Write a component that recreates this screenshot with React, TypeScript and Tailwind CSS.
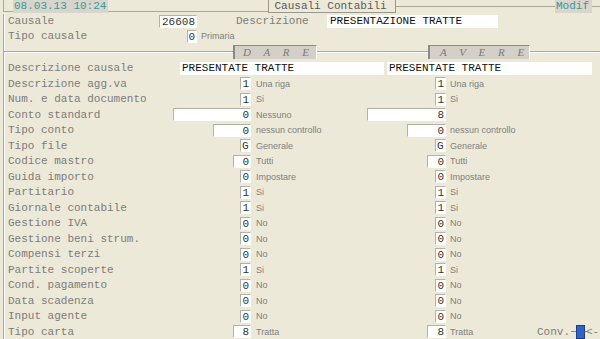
import React from "react";

type Cell = { v: string; w: string; t: string };
type Row = { label: string; d: Cell; a: Cell };

const rows: Row[] = [
  { label: "Descrizione agg.va", d: { v: "1", w: "w-[11px]", t: "Una riga" }, a: { v: "1", w: "w-[11px]", t: "Una riga" } },
  { label: "Num. e data documento", d: { v: "1", w: "w-[11px]", t: "Si" }, a: { v: "1", w: "w-[11px]", t: "Si" } },
  { label: "Conto standard", d: { v: "0", w: "w-[78px]", t: "Nessuno" }, a: { v: "8", w: "w-[79px]", t: "" } },
  { label: "Tipo conto", d: { v: "0", w: "w-[38px]", t: "nessun controllo" }, a: { v: "0", w: "w-[39px]", t: "nessun controllo" } },
  { label: "Tipo file", d: { v: "G", w: "w-[11px]", t: "Generale" }, a: { v: "G", w: "w-[11px]", t: "Generale" } },
  { label: "Codice mastro", d: { v: "0", w: "w-[18px]", t: "Tutti" }, a: { v: "0", w: "w-[19px]", t: "Tutti" } },
  { label: "Guida importo", d: { v: "0", w: "w-[11px]", t: "Impostare" }, a: { v: "0", w: "w-[11px]", t: "Impostare" } },
  { label: "Partitario", d: { v: "1", w: "w-[11px]", t: "Si" }, a: { v: "1", w: "w-[11px]", t: "Si" } },
  { label: "Giornale contabile", d: { v: "1", w: "w-[11px]", t: "Si" }, a: { v: "1", w: "w-[11px]", t: "Si" } },
  { label: "Gestione IVA", d: { v: "0", w: "w-[11px]", t: "No" }, a: { v: "0", w: "w-[11px]", t: "No" } },
  { label: "Gestione beni strum.", d: { v: "0", w: "w-[11px]", t: "No" }, a: { v: "0", w: "w-[11px]", t: "No" } },
  { label: "Compensi terzi", d: { v: "0", w: "w-[11px]", t: "No" }, a: { v: "0", w: "w-[11px]", t: "No" } },
  { label: "Partite scoperte", d: { v: "1", w: "w-[11px]", t: "Si" }, a: { v: "1", w: "w-[11px]", t: "Si" } },
  { label: "Cond. pagamento", d: { v: "0", w: "w-[11px]", t: "No" }, a: { v: "0", w: "w-[11px]", t: "No" } },
  { label: "Data scadenza", d: { v: "0", w: "w-[11px]", t: "No" }, a: { v: "0", w: "w-[11px]", t: "No" } },
  { label: "Input agente", d: { v: "0", w: "w-[11px]", t: "No" }, a: { v: "0", w: "w-[11px]", t: "No" } },
  { label: "Tipo carta", d: { v: "8", w: "w-[18px]", t: "Tratta" }, a: { v: "8", w: "w-[19px]", t: "Tratta" } },
];

const mono = "font-['Liberation_Mono','Courier_New',monospace]";
const sans = "font-['Liberation_Sans',Arial,sans-serif]";

function Field({ v, w, left }: { v: string; w: string; left?: boolean }) {
  return (
    <div
      className={`${w} h-[13px] bg-white border-t border-l border-[#b4b1a6] border-b border-r border-b-white border-r-white text-[11px] leading-[12px] text-[#333] ${
        left ? "text-left pl-[1px]" : "text-right pr-[1px]"
      } overflow-hidden whitespace-pre`}
    >
      {v}
    </div>
  );
}

function Desc({ t }: { t: string }) {
  return <span className={`${sans} text-[9px] leading-[13px] text-[#808080] whitespace-nowrap`}>{t}</span>;
}

export default function App() {
  return (
    <div className={`w-[600px] h-[339px] bg-[#ece9d8] overflow-hidden ${mono} text-[11px] text-[#7c7c7c]`}>
      {/* header */}
      <div className="flex items-start h-[14px]">
        <div className="w-[3px]" />
        <div className="w-[10px] h-[12px] border-b border-l border-[#aca899]" />
        <div className="w-[95px] h-[13px] bg-[#d8d5cc] text-[#3a9a9a] leading-[13px] pl-[1px] whitespace-nowrap">
          08.03.13 10:24
        </div>
        <div className="flex-1 h-[12px] border-b border-[#aca899]" />
        <div className="w-[128px] h-[13px] border-l border-r border-b border-[#9a978c] text-[#5a5a5a] leading-[12px] pl-[6px] whitespace-nowrap">
          Causali Contabili
        </div>
        <div className="flex-1 h-[7px] border-b border-[#aca899]" />
        <div className="w-[37px] h-[13px] bg-[#d8d5cc] text-[#3a9a9a] leading-[13px] pl-[1px]">Modif</div>
        <div className="w-[8px] h-[7px] border-b border-[#aca899]" />
      </div>

      {/* body */}
      <div className="ml-[3px] border-l border-[#aca899] h-[325px]">
        <div className="border-l border-white h-full pl-[3px]">
          {/* Causale row */}
          <div className="flex items-center h-[15px]">
            <div className="w-[151px]">Causale</div>
            <Field v="26608" w="w-[38px]" />
            <div className="w-[39px]" />
            <div className="w-[91px]">Descrizione</div>
            <div className="w-[171px] h-[13px] bg-white text-[#111] leading-[13px] pl-[3px] whitespace-nowrap">
              PRESENTAZIONE TRATTE
            </div>
          </div>
          {/* Tipo causale */}
          <div className="flex items-center h-[15px]">
            <div className="w-[179px]">Tipo causale</div>
            <Field v="0" w="w-[10px]" />
            <div className="pl-[4px]">
              <Desc t="Primaria" />
            </div>
          </div>
          {/* separator */}
          <div className="flex items-start h-[16.5px] -ml-[4px]">
            <div className="w-[229px] h-[8px] border-b border-[#aca899] shadow-[0_1px_0_#ffffff]" />
            <div className="w-[84px] h-[14px] mt-[1px] bg-[#d4d0c8] border-l-2 border-t border-[#8a8a8a] border-r border-r-[#ffffff] font-['Liberation_Serif','Times_New_Roman',serif] italic text-[11px] leading-[13px] text-[#7a7a7a] tracking-[5px] pl-[8px] whitespace-nowrap">
              D A R E
            </div>
            <div className="w-[111px] h-[8px] border-b border-[#aca899] shadow-[0_1px_0_#ffffff]" />
            <div className="w-[102px] h-[14px] mt-[1px] bg-[#d4d0c8] border-l-2 border-t border-[#8a8a8a] border-r border-r-[#ffffff] font-['Liberation_Serif','Times_New_Roman',serif] italic text-[11px] leading-[13px] text-[#7a7a7a] tracking-[5px] pl-[10px] whitespace-nowrap">
              A V E R E
            </div>
            <div className="flex-1 h-[8px] border-b border-[#aca899] shadow-[0_1px_0_#ffffff]" />
          </div>
          {/* Descrizione causale */}
          <div className="flex items-center h-[15.5px]">
            <div className="w-[172px]">Descrizione causale</div>
            <div className="w-[204px] h-[13px] bg-white text-[#111] leading-[13px] pl-[2px] whitespace-nowrap">
              PRESENTATE TRATTE
            </div>
            <div className="w-[3px]" />
            <div className="w-[205px] h-[13px] bg-white text-[#111] leading-[13px] pl-[2px] whitespace-nowrap">
              PRESENTATE TRATTE
            </div>
          </div>
          {rows.map((r, i) => (
            <div key={i} className="flex items-center h-[15.5px]">
              <div className="w-[162px] whitespace-nowrap">{r.label}</div>
              <div className="w-[81px] flex justify-end">
                <Field v={r.d.v} w={r.d.w} left={r.d.v === "G"} />
              </div>
              <div className="w-[114px] pl-[5px]">
                <Desc t={r.d.t} />
              </div>
              <div className="w-[81px] flex justify-end">
                <Field v={r.a.v} w={r.a.w} left={r.a.v === "G"} />
              </div>
              <div className="pl-[4px] flex-1">
                <Desc t={r.a.t} />
              </div>
              {i === rows.length - 1 && (
                <div className="flex items-center whitespace-nowrap w-[63px]">
                  <span>Conv.</span>
                  <div className="w-[5px] h-px bg-[#8a8a8a] ml-[1px]" />
                  <div className="w-[9px] h-[14px] bg-[#2f63c8] border border-[#1c3f85]" />
                  <div className="w-[2px] h-px bg-[#8a8a8a]" />
                  <span className="-ml-[1px]">&lt;-</span>
                </div>
              )}
            </div>
          ))}
        </div>
      </div>
    </div>
  );
}
